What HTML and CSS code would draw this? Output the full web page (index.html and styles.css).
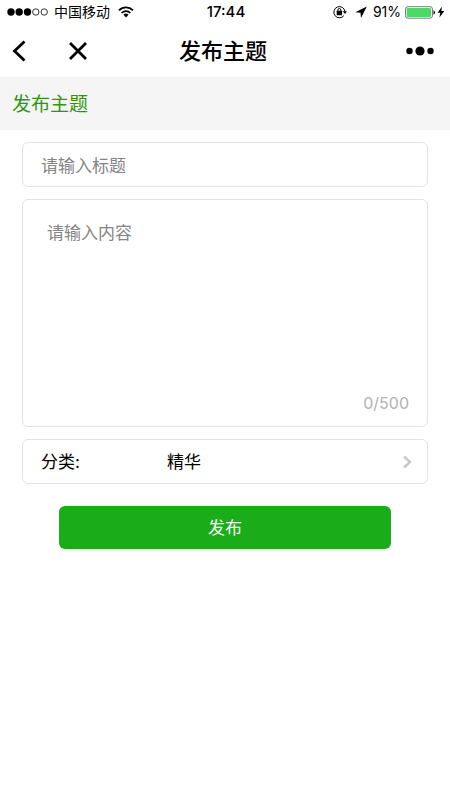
FILE: index.html
```html
<!DOCTYPE html>
<html lang="zh-CN">
<head>
<meta charset="utf-8">
<meta name="viewport" content="width=device-width, initial-scale=1">
<title>发布主题</title>
<link rel="stylesheet" href="styles.css">
</head>
<body>
<div class="status">
  <div class="status-left">
    <svg width="42" height="10" viewBox="0 0 42 10" aria-hidden="true">
      <circle cx="4" cy="5" r="3.7"/><circle cx="12.2" cy="5" r="3.7"/><circle cx="20.5" cy="5" r="3.7"/>
      <g fill="none" stroke="#000" stroke-width=".8"><circle cx="28.8" cy="5" r="3.2"/><circle cx="37.2" cy="5" r="3.2"/></g>
    </svg>
    <span class="carrier">中国移动</span>
    <svg width="16" height="12" viewBox="0 0 16 12" aria-hidden="true">
      <g fill="none" stroke="#000" stroke-width="1.7"><path d="M1 4.3a10 10 0 0 1 14 0"/><path d="M3.6 7a6.3 6.3 0 0 1 8.8 0"/></g>
      <path d="M5.5 8.8a3.6 3.6 0 0 1 5 0L8 11.5z"/>
    </svg>
  </div>
  <div class="time">17:44</div>
  <div class="status-right">
    <svg width="14" height="14" viewBox="0 0 14 14" aria-hidden="true">
      <path d="M10.9 10.6A5.6 5.6 0 1 1 12 6.5" fill="none" stroke="#000"/>
      <path d="M9.8 6.2h4.2L12 9z"/>
      <rect x="3.7" y="5.8" width="5.400" height="4.400" rx=".5"/>
      <path d="M4.900 6.200V5a1.500 1.500 0 0 1 3 0v1.200" fill="none" stroke="#000"/>
    </svg>
    <svg class="arrow" width="12" height="12" viewBox="0 0 12 12" aria-hidden="true"><path d="M11.800.4L.3 6.200l5.200.5.5 5.200z"/></svg>
    <span class="percent">91%</span>
    <svg width="31" height="13" viewBox="0 0 31 13" aria-hidden="true">
      <rect x=".5" y=".7" width="27" height="11.500" rx="2.500" fill="#fff" stroke="#555" stroke-width=".8"/>
      <rect x="1.700" y="1.900" width="24.300" height="9.100" rx="1.300" fill="#4cd964"/>
      <path d="M28.500 4.200q1.500.7 1.500 2.300t-1.500 2.300z"/>
    </svg>
    <svg class="bolt" width="8" height="12" viewBox="0 0 8 12" aria-hidden="true"><path d="M5 .5L.6 6.700h2.700L2.400 11.500 7.400 5H4.300z"/></svg>
  </div>
</div>
<header class="nav">
  <div class="nav-left">
    <button class="icon-button" type="button" aria-label="返回"><svg width="14" height="22" viewBox="0 0 14 22"><path d="M12.500 1.500L2.500 11l10 9.500"/></svg></button>
    <button class="icon-button" type="button" aria-label="关闭"><svg width="20" height="20" viewBox="0 0 20 20"><path d="M2 2l16 16M18 2L2 18"/></svg></button>
  </div>
  <h1>发布主题</h1>
  <button class="icon-button more" type="button" aria-label="更多"><svg width="28" height="10" viewBox="0 0 28 10"><circle cx="3.500" cy="5" r="3.200"/><circle cx="14" cy="5" r="4.600"/><circle cx="24.500" cy="5" r="3.200"/></svg></button>
</header>
<main>
  <h2>发布主题</h2>
  <form class="form">
    <input class="field title-input" type="text" placeholder="请输入标题" aria-label="标题">
    <div class="field content-box">
      <textarea maxlength="500" placeholder="请输入内容" aria-label="内容"></textarea>
      <div class="counter">0/500</div>
    </div>
    <div class="field category">
      <label for="category">分类:</label>
      <select id="category"><option>精华</option></select>
      <svg width="10" height="14" viewBox="0 0 10 14" aria-hidden="true"><path d="M2 1.500L8 7l-6 5.500"/></svg>
    </div>
    <button class="submit" type="button">发布</button>
  </form>
</main>
</body>
</html>
```
FILE: styles.css
```css
* {
  box-sizing: border-box;
}

body {
  margin: 0;
  background: #fff;
  color: #000;
  font-family: Inter, "Noto Sans CJK SC", sans-serif;
  font-size: 17px;
  line-height: 24px;
}

svg {
  display: block;
  flex: none;
}

button,
input,
textarea,
select {
  font: inherit;
}

.status {
  display: grid;
  grid-template-columns: 1fr auto 1fr;
  align-items: center;
  height: 24px;
  padding: 0 5px 0 7px;
  font-size: 14px;
}

.status-left,
.status-right {
  display: flex;
  align-items: center;
}

.carrier {
  margin: 0 8px 0 5px;
}

.time {
  font-size: 15px;
  font-weight: 500;
}

.status-right {
  justify-content: flex-end;
}

.arrow {
  margin: 0 6px 0 8px;
}

.percent {
  margin-right: 4px;
}

.bolt {
  margin-left: 1px;
}

.nav {
  display: grid;
  grid-template-columns: 1fr auto 1fr;
  align-items: center;
  height: 53px;
  padding: 0 16px 0 12px;
}

.nav-left {
  display: flex;
  align-items: center;
  gap: 42px;
}

.icon-button {
  padding: 0;
  border: 0;
  background: none;
}

.nav-left path {
  fill: none;
  stroke: #000;
  stroke-width: 2.8;
}

.more {
  justify-self: end;
}

h1 {
  margin: 0;
  font-size: 22px;
  font-weight: 500;
  line-height: 32px;
}

h2 {
  margin: 0;
  padding: 13px 12px 11px;
  background: #f5f5f5;
  color: #2f960b;
  font-size: 19px;
  font-weight: 400;
  line-height: 29px;
}

.form {
  display: flex;
  flex-direction: column;
  gap: 12px;
  padding: 12px 22px;
}

.field {
  width: 100%;
  border: 1px solid #e3e3e3;
  border-radius: 6px;
  background: #fff;
}

.title-input {
  height: 45px;
  padding: 2px 18px 0;
  outline: 0;
}

.content-box {
  padding: 21px 18px 11px 24px;
}

textarea {
  display: block;
  width: 100%;
  height: 170px;
  padding: 0;
  border: 0;
  outline: 0;
  resize: none;
  background: none;
}

::placeholder {
  color: #858585;
  opacity: 1;
}

.counter {
  color: #b2b2b2;
  font-size: 16px;
  text-align: right;
}

.category {
  display: grid;
  grid-template-columns: 126px 1fr 10px;
  align-items: center;
  height: 45px;
  padding: 0 15px 0 18px;
}

select {
  height: 43px;
  padding: 0;
  border: 0;
  outline: 0;
  appearance: none;
  background: none;
  color: #000;
}

.category path {
  fill: none;
  stroke: #c8c8cd;
  stroke-width: 2.5;
}

.submit {
  height: 43px;
  margin: 10px 37px 0;
  padding: 0;
  border: 0;
  border-radius: 6px;
  background: #1aad19;
  color: #fff;
}
```
